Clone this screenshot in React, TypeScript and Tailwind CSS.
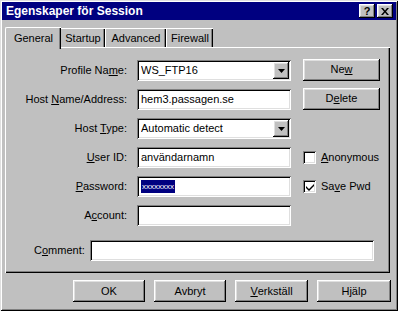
import React from 'react';

const raised =
    'bg-[#c0c0c0] shadow-[inset_-1px_-1px_0_#000,inset_1px_1px_0_#fff,inset_-2px_-2px_0_#808080,inset_2px_2px_0_#dfdfdf]';
const sunken =
    'bg-white shadow-[inset_1px_1px_0_#808080,inset_-1px_-1px_0_#fff,inset_2px_2px_0_#000,inset_-2px_-2px_0_#dfdfdf]';

const U = ({ children }: { children: React.ReactNode }) => <span className="underline underline-offset-[1px]">{children}</span>;

const Field = ({ value, combo, width = 'w-[154px]' }: { value?: React.ReactNode; combo?: boolean; width?: string }) => (
    <div className={`${sunken} ${width} h-[21px] flex items-center pl-[4px] pr-[2px]`}>
        <div className="flex-1 whitespace-nowrap overflow-hidden">{value}</div>
        {combo && (
            <div className={`${raised} w-[16px] h-[17px] flex items-center justify-center`}>
                <svg width="7" height="4" viewBox="0 0 7 4">
                    <path d="M0 0h7L3.5 4z" fill="#000" />
                </svg>
            </div>
        )}
    </div>
);

const Check = ({ checked, label }: { checked?: boolean; label: React.ReactNode }) => (
    <div className="flex items-center gap-[5px]">
        <div className={`${sunken} w-[13px] h-[13px] flex items-center justify-center`}>
            {checked && (
                <svg width="8" height="8" viewBox="0 0 8 8">
                    <path d="M0 3l3 3 5-5v2L3 8 0 5z" fill="#000" />
                </svg>
            )}
        </div>
        <div>{label}</div>
    </div>
);

const Btn = ({ children, className = '' }: { children: React.ReactNode; className?: string }) => (
    <div className={`${raised} h-[22px] flex items-center justify-center ${className}`}>{children}</div>
);

const Row = ({ label, children, right }: { label: React.ReactNode; children: React.ReactNode; right?: React.ReactNode }) => (
    <div className="flex items-center h-[21px]">
        <div className="w-[131px] text-right pr-[10px]">{label}</div>
        {children}
        <div className="ml-[12px]">{right}</div>
    </div>
);

const tab = 'h-[19px] pt-[4px] text-center border-t border-white shadow-[inset_-1px_0_0_#000,inset_-2px_0_0_#808080]';

export default function App() {
    return (
        <div
            className="w-[398px] h-[311px] bg-[#c0c0c0] text-[11px] text-black leading-none shadow-[inset_1px_1px_0_#dfdfdf,inset_-1px_-1px_0_#000,inset_2px_2px_0_#fff,inset_-2px_-2px_0_#808080] pt-[2px] px-[2px] flex flex-col"
            style={{ fontFamily: '"Liberation Sans", Arial, sans-serif' }}
        >
            {/* title bar */}
            <div className="h-[18px] bg-[#000080] flex items-center pl-[4px] pr-[3px]">
                <div className="flex-1 text-white font-bold text-[12px]">Egenskaper för Session</div>
                <div className={`${raised} w-[16px] h-[14px] flex items-center justify-center font-bold text-[11px] mr-[2px]`}>?</div>
                <div className={`${raised} w-[16px] h-[14px] flex items-center justify-center`}>
                    <svg width="8" height="7" viewBox="0 0 8 7">
                        <path d="M0 0h2l2 2.5L6 0h2L5 3.5 8 7H6L4 4.5 2 7H0l3-3.5z" fill="#000" />
                    </svg>
                </div>
            </div>

            {/* tabs */}
            <div className="flex items-end h-[27px] pl-[3px]">
                <div className="relative z-10 w-[56px] h-[22px] mb-[-2px] pt-[5px] text-center bg-[#c0c0c0] border-l border-t border-white rounded-tl-[2px] shadow-[inset_-1px_0_0_#000,inset_-2px_0_0_#808080]">
                    General
                </div>
                <div className={`${tab} w-[44px]`}>Startup</div>
                <div className={`${tab} w-[61px] border-l`}>Advanced</div>
                <div className={`${tab} w-[47px] border-l`}>Firewall</div>
            </div>

            {/* panel */}
            <div className="ml-[3px] w-[385px] h-[226px] border-t border-l border-white shadow-[inset_-1px_-1px_0_#000,inset_-2px_-2px_0_#808080] pt-[12px] flex flex-col gap-[8px]">
                <Row label={<>Profile Na<U>m</U>e:</>} right={<Btn className="w-[77px] h-[21px] mt-[-2px]">Ne<U>w</U></Btn>}>
                    <Field value="WS_FTP16" combo />
                </Row>
                <Row label={<>Host <U>N</U>ame/Address:</>} right={<Btn className="w-[77px] h-[21px] mt-[-2px]">D<U>e</U>lete</Btn>}>
                    <Field value="hem3.passagen.se" />
                </Row>
                <Row label={<>Host <U>T</U>ype:</>}>
                    <Field value="Automatic detect" combo />
                </Row>
                <Row label={<><U>U</U>ser ID:</>} right={<Check label={<><U>A</U>nonymous</>} />}>
                    <Field value="användarnamn" />
                </Row>
                <Row label={<><U>P</U>assword:</>} right={<Check checked label={<>Sa<U>v</U>e Pwd</>} />}>
                    <Field
                        value={<span className="inline-block bg-[#000080] text-white text-[8px] leading-[13px] px-[1px]">xxxxxxxx</span>}
                    />
                </Row>
                <Row label={<>A<U>c</U>count:</>}>
                    <Field />
                </Row>
                <div className="flex items-center h-[20px] mt-[6px] pl-[28px]">
                    <div className="w-[56px]">C<U>o</U>mment:</div>
                    <Field width="w-[284px]" />
                </div>
            </div>

            {/* buttons */}
            <div className="flex pl-[71px] mt-[7px] gap-[9px]">
                <Btn className="w-[72px]">OK</Btn>
                <Btn className="w-[72px]">Avbryt</Btn>
                <Btn className="w-[73px]">
                    <U>V</U>erkställ
                </Btn>
                <Btn className="w-[74px]">Hjälp</Btn>
            </div>
        </div>
    );
}
